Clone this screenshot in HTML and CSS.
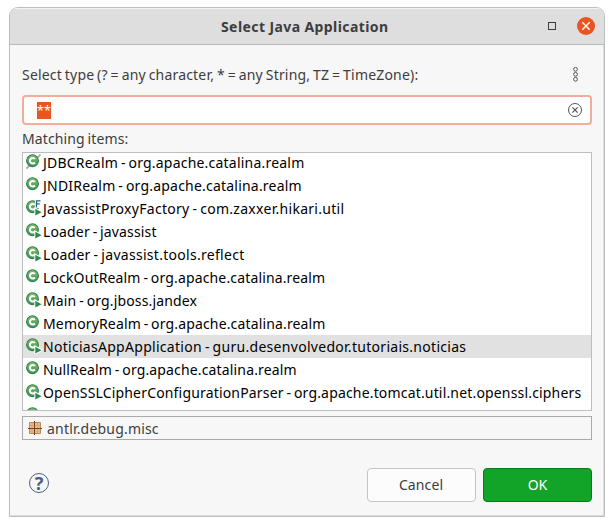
FILE: index.html
```html
<!DOCTYPE html>
<html lang="en">
<head>
<meta charset="utf-8">
<title>Select Java Application</title>
<link rel="stylesheet" href="styles.css">
</head>
<body>
<svg class="defs" width="0" height="0" aria-hidden="true">
  <defs>
    <linearGradient id="green" x1="0" y1="0" x2="0" y2="1"><stop offset="0" stop-color="#8fbd70"/><stop offset="1" stop-color="#3a9258"/></linearGradient>
    <symbol id="class" viewBox="0 0 16 16">
      <circle cx="6.5" cy="6.7" r="5.9" fill="url(#green)" stroke="#2c8549" stroke-width="1.1"/>
      <path d="M8.9 4.9A2.8 2.8 0 1 0 8.9 8.5" fill="none" stroke="#fff" stroke-width="2"/>
    </symbol>
    <symbol id="run" viewBox="0 0 16 16">
      <use href="#class"/>
      <path d="M9.3 8.8v6.7L15.6 12.2z" fill="#2f8a50" stroke="#fff" stroke-width="2" paint-order="stroke"/>
    </symbol>
    <symbol id="abstract" viewBox="0 0 16 16">
      <path d="M.5 14.5L14.5 .5" stroke="#aaa" stroke-width="1.8"/>
      <use href="#class"/>
    </symbol>
    <symbol id="final" viewBox="0 0 16 16">
      <use href="#run"/>
      <path d="M9 0h6v8h-6z" fill="#fff"/>
      <path d="M10.5 7.5V.9h4M10.5 3.9h3.3" fill="none" stroke="#2c5f94" stroke-width="1.3"/>
    </symbol>
  </defs>
</svg>
<main class="dialog">
  <header class="titlebar">
    <h1 class="title">Select Java Application</h1>
    <div class="controls">
      <span class="maximize"></span>
      <span class="close"><svg width="18" height="18" viewBox="0 0 18 18"><path d="M5.3 5.3l7.4 7.4M12.7 5.3l-7.4 7.4" stroke="#fff" stroke-width="1.4"/></svg></span>
    </div>
  </header>
  <section class="body">
    <div class="prompt"><label class="prompt-text">Select type (? = any character, * = any String, TZ = TimeZone):</label>
      <svg class="menu" width="7" height="16" viewBox="0 0 7 16" fill="none" stroke="#555" stroke-width="1"><circle cx="3.5" cy="2.3" r="1.9"/><circle cx="3.5" cy="7.3" r="1.9"/><circle cx="3.5" cy="12.3" r="1.9"/></svg>
    </div>
    <div class="search"><span class="selection">**</span>
      <svg width="16" height="16" viewBox="0 0 16 16" fill="none" stroke="#555"><circle cx="8" cy="8" r="6.5"/><path d="M5.4 5.4l5.2 5.2M10.6 5.4l-5.2 5.2" stroke-width="1.2"/></svg>
    </div>
    <label class="matching">Matching items:</label>
    <ul class="list">
      <li class="row"><svg class="icon"><use href="#abstract"/></svg><span class="loose">JDBCRealm - org.apache.catalina.realm</span></li>
      <li class="row"><svg class="icon"><use href="#class"/></svg><span class="loose">JNDIRealm - org.apache.catalina.realm</span></li>
      <li class="row"><svg class="icon"><use href="#final"/></svg><span class="wide">JavassistProxyFactory - com.zaxxer.hikari.util</span></li>
      <li class="row"><svg class="icon"><use href="#run"/></svg><span>Loader - javassist</span></li>
      <li class="row"><svg class="icon"><use href="#run"/></svg><span class="wide">Loader - javassist.tools.reflect</span></li>
      <li class="row"><svg class="icon"><use href="#class"/></svg><span>LockOutRealm - org.apache.catalina.realm</span></li>
      <li class="row"><svg class="icon"><use href="#run"/></svg><span>Main - org.jboss.jandex</span></li>
      <li class="row"><svg class="icon"><use href="#class"/></svg><span>MemoryRealm - org.apache.catalina.realm</span></li>
      <li class="row selected"><svg class="icon"><use href="#run"/></svg><span class="wide">NoticiasAppApplication - guru.desenvolvedor.tutoriais.noticias</span></li>
      <li class="row"><svg class="icon"><use href="#class"/></svg><span>NullRealm - org.apache.catalina.realm</span></li>
      <li class="row"><svg class="icon"><use href="#run"/></svg><span class="long">OpenSSLCipherConfigurationParser - org.apache.tomcat.util.net.openssl.ciphers</span></li>
      <li class="row"><svg class="icon"><use href="#class"/></svg></li>
    </ul>
    <div class="status">
      <svg width="14" height="14" viewBox="0 0 14 14"><path d="M1.5 1.5h11v11h-11z" fill="#e2bd88" stroke="#b98a62"/><path d="M4 2v10M9.5 2v10M2 4.5h10M2 10h10" stroke="#d3a474" stroke-width=".7"/><path d="M6.5 0v14M0 7.5h14" stroke="#7d3d27" stroke-width="1"/></svg>
      <span class="package">antlr.debug.misc</span>
    </div>
    <footer class="actions">
      <span class="help">?</span>
      <button class="button cancel">Cancel</button>
      <button class="button ok">OK</button>
    </footer>
  </section>
</main>
</body>
</html>
```
FILE: styles.css
```css
* { box-sizing: border-box; }
body { margin: 0; background: #fff; font: 14px/23px "Noto Sans", "Open Sans", sans-serif; color: #3d3d3d; white-space: nowrap; }
.defs { display: block; }
.dialog { width: 596px; height: 510px; margin: 7px 0 0 9px; border: 1px solid #bdbdbd; border-radius: 9px 9px 0 0; background: #f7f7f7; box-shadow: inset -1px -1px #ddd; overflow: hidden; }
.titlebar { height: 37px; display: grid; grid-template-columns: 1fr; align-items: center; background: #dedede; border-bottom: 1px solid #b9b9b9; box-shadow: inset 0 1px #f3f3f3; }
.title { grid-area: 1 / 1; margin: 2px 0 0 211px; font-size: 14px; line-height: 20px; font-weight: 700; letter-spacing: .41px; }
.controls { grid-area: 1 / 1; justify-self: end; display: flex; align-items: center; gap: 21px; padding-right: 9px; }
.maximize { width: 8px; height: 8px; border: 1px solid #3d3d3d; }
.close { width: 18px; height: 18px; border-radius: 50%; background: #e95420; }
.close svg { display: block; }
.body { padding: 0 12px; }
.prompt { height: 50px; padding: 9px 13px 0 0; display: flex; align-items: center; justify-content: space-between; }
.prompt-text { letter-spacing: .19px; word-spacing: -1px; }
.search { height: 30px; padding: 0 7px 0 13px; display: flex; align-items: center; justify-content: space-between; border: 2px solid #f0ad98; border-radius: 4px; background: #fff; }
.selection { width: 14px; height: 17px; font-size: 12.5px; line-height: 17px; background: #e95420; color: #fff; text-align: center; }
.matching { display: block; height: 27px; line-height: 28px; letter-spacing: .12px; word-spacing: -1px; }
.list { height: 259px; margin: 0; padding: 0; list-style: none; overflow: hidden; background: #fff; border: 1px solid #bdbdbd; color: #000; letter-spacing: .15px; word-spacing: -1px; }
.loose { letter-spacing: .21px; }
.wide { letter-spacing: .29px; }
.long { letter-spacing: .17px; }
.row { height: 23px; display: flex; }
.row:first-child { margin-top: -2px; }
.selected { background: #e1e1e1; }
.icon { flex: none; width: 16px; height: 16px; margin: 3px 1px 0 3px; }
.status { height: 24px; margin-top: 5px; padding-left: 5px; display: flex; align-items: center; gap: 5px; border: 1px solid #aaa; }
.package { letter-spacing: .19px; }
.actions { margin-top: 28px; display: flex; align-items: center; }
.help { width: 20px; height: 20px; margin: 0 auto 4px 7px; border: 1px solid #4a6185; border-radius: 50%; font-size: 18px; line-height: 18px; font-weight: 700; text-align: center; color: #4a6185; }
.button { width: 109px; height: 34px; padding: 0; border: 1px solid #c4c4c4; border-radius: 4px; background: #fcfcfc; font: inherit; line-height: 32px; color: #3d3d3d; }
.cancel { margin-right: 7px; padding-right: 1px; letter-spacing: .1px; }
.ok { border-color: #0b7a1b; background: #12a428; color: #fff; }
```
